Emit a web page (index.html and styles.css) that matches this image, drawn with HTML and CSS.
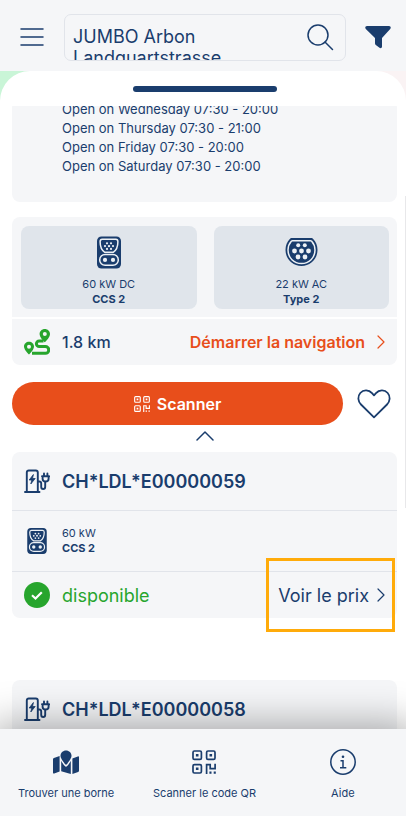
FILE: index.html
```html
<!DOCTYPE html>
<html lang="fr">
<head>
<meta charset="utf-8">
<meta name="viewport" content="width=device-width, initial-scale=1">
<title>JUMBO Arbon</title>
<link rel="stylesheet" href="styles.css">
</head>
<body>
<svg class="sprite" aria-hidden="true">
  <symbol id="qr" viewBox="0 0 24 24">
    <g fill="none" stroke="currentColor" stroke-width="1.7">
      <rect x="1" y="1" width="8.4" height="8.4" rx="1.4"/>
      <rect x="14.6" y="1" width="8.4" height="8.4" rx="1.4"/>
      <rect x="1" y="14.6" width="8.4" height="8.4" rx="1.4"/>
      <path d="M14.6 24V14.6h3.6v4h4.9v-4.8"/>
    </g>
    <path fill="currentColor" d="M3.9 3.9h2.6v2.6H3.9zM17.5 3.9h2.6v2.6h-2.6zM3.9 17.5h2.6v2.6H3.9zM17.4 21.6h2.1v2.2h-2.1zM21.7 21.6h2.1v2.2h-2.1z"/>
  </symbol>
  <symbol id="ccs" viewBox="0 0 24 32">
    <rect width="24" height="32" rx="4.5" fill="currentColor"/>
    <g fill="none" stroke="#edf1f5" stroke-width="1.5">
      <path d="M5.2 2.800h13.600c1.500 0 2.100 1 2.100 2.400 0 4.600-1.500 8.500-4.700 10.600H7.800C4.600 13.700 3.100 9.800 3.100 5.200c0-1.400.6-2.400 2.100-2.400z"/>
      <rect x="2.700" y="18" width="18.600" height="10.800" rx="5.400"/>
    </g>
    <g fill="#edf1f5">
      <circle cx="10" cy="6.800" r="1.100"/><circle cx="14" cy="6.800" r="1.100"/>
      <circle cx="8" cy="9.600" r="1.100"/><circle cx="12" cy="9.600" r="1.200"/><circle cx="16" cy="9.600" r="1.100"/>
      <circle cx="10" cy="12.400" r="1.100"/><circle cx="14" cy="12.400" r="1.100"/>
      <circle cx="8" cy="23.400" r="2.100"/><circle cx="16" cy="23.400" r="2.100"/>
    </g>
  </symbol>
  <symbol id="station" viewBox="0 0 26 24">
    <g fill="none" stroke="currentColor" stroke-width="1.900" stroke-linecap="round" stroke-linejoin="round">
      <path d="M1 23h14.500M2.800 23V3.500Q2.800 1.500 4.800 1.500h7Q13.800 1.500 13.800 3.500V23M14 12.500h1.300c1.300 0 1.900.8 1.900 2v3.200c0 1.500.8 2.300 2 2.300s2-.8 2-2.300V13"/>
      <path d="M18 7.300h7.200M20 4.500v2.300M23.400 4.500v2.300M18.600 7.500v2.200c0 1.700 1.200 2.800 3 2.800s3-1.100 3-2.800V7.500"/>
    </g>
    <path fill="currentColor" stroke="currentColor" stroke-width=".8" stroke-linejoin="round" d="M9.400 5.500 5.200 11h2.600l-1 4 4.400-5.500H8.500z"/>
  </symbol>
  <symbol id="chevron" viewBox="0 0 8 14">
    <path d="M1 1l6 6-6 6" fill="none" stroke="currentColor" stroke-width="1.200" stroke-linecap="round" stroke-linejoin="round"/>
  </symbol>
</svg>

<header class="topbar">
  <button class="icon-button" aria-label="Menu">
    <svg width="24" height="20" viewBox="0 0 24 20"><path d="M1 1h22M1 9h22M1 17h22" stroke="currentColor" stroke-width="1.500" stroke-linecap="round"/></svg>
  </button>
  <div class="search">
    <textarea class="search-input" aria-label="Recherche" spellcheck="false">JUMBO Arbon
Landquartstrasse</textarea>
    <button class="icon-button" aria-label="Rechercher">
      <svg width="27" height="27" viewBox="0 0 27 27" fill="none" stroke="currentColor" stroke-width="1.500" stroke-linecap="round"><circle cx="11" cy="11" r="10"/><path d="M18 18l7.500 7.500"/></svg>
    </button>
  </div>
  <button class="icon-button" aria-label="Filtrer">
    <svg width="26" height="24" viewBox="0 0 26 24"><path fill="currentColor" d="M2 0h22c1.600 0 2.300 1.700 1.200 2.900L17 12v8.600c0 1.400-1.400 2-2.500 1.200l-3.700-2.900c-.6-.4-.8-.9-.8-1.600V12L.8 2.900C-.3 1.700.4 0 2 0z"/></svg>
  </button>
</header>

<div class="map">
<main class="sheet">
  <div class="handle"></div>
  <div class="scroll">
    <section class="card hours">
      <p>Open on Wednesday 07:30 - 20:00</p>
      <p>Open on Thursday 07:30 - 21:00</p>
      <p>Open on Friday 07:30 - 20:00</p>
      <p>Open on Saturday 07:30 - 20:00</p>
    </section>

    <section class="card connectors">
      <div class="tiles">
        <div class="tile">
          <svg width="24" height="33"><use href="#ccs"/></svg>
          <p class="spec">60 kW DC<strong>CCS 2</strong></p>
        </div>
        <div class="tile">
          <svg width="33" height="33" viewBox="0 0 33 33">
            <path fill="currentColor" d="M7 2h19c1 0 1.600.3 2.200 1 2.700 3 4.300 6.300 4.300 11 0 9-7 16-16 16S.5 23 .5 14C.5 9.300 2.100 6 4.800 3 5.400 2.300 6 2 7 2z"/>
            <path fill="none" stroke="#edf1f5" stroke-width="1.500" d="M7.500 4.700h18c.5 0 .8.200 1.200.6 2.200 2.500 3.300 5.200 3.300 8.800 0 7.600-6 13.500-13.500 13.500S3 21.700 3 14.100c0-3.600 1.100-6.300 3.300-8.800.4-.4.700-.6 1.200-.6z"/>
            <g fill="#edf1f5"><circle cx="13.200" cy="9.300" r="2"/><circle cx="19.800" cy="9.300" r="2"/><circle cx="9.500" cy="15" r="2.400"/><circle cx="16.500" cy="15" r="2.400"/><circle cx="23.500" cy="15" r="2.400"/><circle cx="13" cy="21" r="2.400"/><circle cx="20" cy="21" r="2.400"/></g>
          </svg>
          <p class="spec">22 kW AC<strong>Type 2</strong></p>
        </div>
      </div>
      <div class="row distance">
        <svg class="row-icon green" width="26" height="26" viewBox="0 0 26 26">
          <path fill="currentColor" fill-rule="evenodd" d="M20.800 0c2.900 0 5.200 2.200 5.200 5 0 2.600-3 6.500-5.200 8.300C18.600 11.500 15.600 7.600 15.600 5c0-2.800 2.300-5 5.200-5zm0 3a2 2 0 1 0 0 4 2 2 0 0 0 0-4zM5 12.700c2.800 0 5 2.100 5 4.800 0 2.500-2.900 6.200-5 8-2.100-1.800-5-5.500-5-8 0-2.700 2.200-4.800 5-4.800zm0 3a2 2 0 1 0 0 4 2 2 0 0 0 0-4z"/>
          <path fill="none" stroke="currentColor" stroke-width="3" d="M19.500 12h-4.300a2.800 2.800 0 0 0 0 5.600h6.200a3.200 3.200 0 0 1 0 6.700H8"/>
        </svg>
        <span class="km">1.8 km</span>
        <a class="row-link navigate" href="#">Démarrer la navigation <svg width="8" height="14"><use href="#chevron"/></svg></a>
      </div>
    </section>

    <div class="actions">
      <button class="scan"><svg width="16" height="16"><use href="#qr"/></svg>Scanner</button>
      <button class="icon-button" aria-label="Favori">
        <svg width="34" height="30" viewBox="0 0 34 30"><path fill="none" stroke="currentColor" stroke-width="1.800" stroke-linejoin="round" d="M17 28.300 4 15.500C.8 12.300.4 7.300 3.300 4c3.200-3.600 8.600-3.300 11.700.2l2 2.200 2-2.200c3.100-3.500 8.500-3.800 11.700-.2 2.900 3.300 2.500 8.300-.7 11.500z"/></svg>
      </button>
    </div>

    <button class="collapse" aria-label="Replier">
      <svg width="18" height="10" viewBox="0 0 18 10"><path d="M1 9l8-8 8 8" fill="none" stroke="currentColor" stroke-width="1.500" stroke-linecap="round" stroke-linejoin="round"/></svg>
    </button>

    <section class="card evse">
      <h2 class="row title"><svg class="row-icon" width="26" height="24"><use href="#station"/></svg>CH*LDL*E00000059</h2>
      <div class="row plug">
        <span class="row-icon"><svg width="20" height="26"><use href="#ccs"/></svg></span>
        <p class="spec">60 kW<strong>CCS 2</strong></p>
      </div>
      <div class="row status">
        <svg class="row-icon green" width="26" height="26" viewBox="0 0 26 26"><circle cx="13" cy="13" r="13" fill="currentColor"/><path d="M8 13.300l3.500 3.200 6.300-6.300" fill="none" stroke="#fff" stroke-width="2.200"/></svg>
        <span class="green">disponible</span>
        <a class="row-link" href="#">Voir le prix <svg width="8" height="14"><use href="#chevron"/></svg></a>
      </div>
      <div class="highlight"></div>
    </section>

    <section class="card evse">
      <h2 class="row title"><svg class="row-icon" width="26" height="24"><use href="#station"/></svg>CH*LDL*E00000058</h2>
    </section>
  </div>
  <div class="scrollbar"></div>
</main>
</div>

<nav class="tabs">
  <a class="tab" href="#">
    <svg width="26" height="26" viewBox="0 0 26 26">
      <path fill="currentColor" d="M0 10.200c0-.6.300-1 .9-1.200L6.600 7v15.500L1.200 24.500c-.7.200-1.200-.1-1.200-.8zM19.400 9.400 24.800 7.400c.7-.3 1.200.1 1.200.8v13.500c0 .6-.3 1-.9 1.200L19.400 25zM8.200 11.800c1 2 2.300 3.700 3.600 5.300.7.800 1.700.8 2.400 0 1.300-1.600 2.600-3.300 3.600-5.300V25l-9.600-2.700z"/>
      <path fill="currentColor" d="M13 1.500c3.100 0 5.500 2.300 5.500 5.300 0 2.600-3 6.400-4.700 8.500-.5.600-1.100.6-1.600 0-1.700-2.100-4.700-5.900-4.700-8.500 0-3 2.400-5.300 5.500-5.300z"/>
    </svg>
    Trouver une borne
  </a>
  <a class="tab" href="#">
    <svg width="26" height="26" viewBox="-1 -1 26 26"><use href="#qr" width="24" height="24"/></svg>
    Scanner le code QR
  </a>
  <a class="tab" href="#">
    <svg width="26" height="26" viewBox="0 0 26 26"><circle cx="13" cy="13" r="12.200" fill="none" stroke="currentColor" stroke-width="1.500"/><circle cx="13" cy="7.800" r="1.300" fill="currentColor"/><path d="M10.500 11.700H13v6.800M10 18.700h6.300" fill="none" stroke="currentColor" stroke-width="1.500"/></svg>
    Aide
  </a>
</nav>
</body>
</html>
```

FILE: styles.css
```css
:root {
  --navy: #1a3d6d;
  --panel: #f5f6f8;
  --line: #e1e4ea;
  --tile: #e0e5eb;
  --orange: #e84e1b;
  --green: #27a52d;
}

* { box-sizing: border-box; }

body {
  margin: 0;
  height: 100vh;
  display: flex;
  flex-direction: column;
  overflow: hidden;
  background: var(--panel);
  color: var(--navy);
  font-family: Inter, "Liberation Sans", sans-serif;
}

p, h2 { margin: 0; }
a { color: inherit; text-decoration: none; }
svg { display: block; flex: none; }
.sprite { position: absolute; width: 0; height: 0; }

button {
  padding: 0;
  border: 0;
  background: none;
  color: inherit;
  font: inherit;
}

.icon-button { flex: none; }
.green { color: var(--green); }

.topbar {
  display: flex;
  align-items: center;
  gap: 19px;
  padding: 14px 15px 10px 20px;
}

.search {
  flex: 1;
  min-width: 0;
  display: flex;
  align-items: center;
  height: 47px;
  margin-left: 1px;
  padding-right: 11px;
  border: 1px solid var(--line);
  border-radius: 7px;
}

.search-input {
  flex: 1;
  min-width: 0;
  height: 45px;
  padding: 11px 0 0 8px;
  border: 0;
  outline: 0;
  resize: none;
  overflow: hidden;
  background: none;
  color: inherit;
  font: 18px/21px Inter, "Liberation Sans", sans-serif;
}

.map {
  flex: 1;
  min-height: 0;
  background: linear-gradient(90deg, #c9f5d7 50%, #faf3f4 50%);
}

.sheet {
  position: relative;
  display: flex;
  flex-direction: column;
  height: 100%;
  border-radius: 30px 30px 0 0;
  background: #fff;
  padding: 0 9px 0 12px;
}

.handle {
  flex: none;
  width: 144px;
  height: 6px;
  margin: 15px auto 14px;
  border-radius: 3px;
  background: var(--navy);
}

.scroll {
  flex: 1;
  overflow: hidden;
}

.scrollbar {
  position: absolute;
  top: 125px;
  right: 0;
  width: 1px;
  height: 312px;
  background: #e8e8ea;
}

.card {
  position: relative;
  border-radius: 8px;
  background: var(--panel);
}

.hours {
  margin-top: -6px;
  margin-bottom: 15px;
  padding: 0 12px 26px 50px;
  font-size: 13px;
  line-height: 19px;
}

.tiles {
  display: grid;
  grid-template-columns: 1fr 1fr;
  gap: 17px;
  padding: 9px 8px 8px 9px;
  border-bottom: 2px solid #fff;
}

.tile {
  display: flex;
  flex-direction: column;
  align-items: center;
  gap: 8px;
  padding: 10px 0 2px;
  border-radius: 8px;
  background: var(--tile);
  text-align: center;
}

.spec {
  font-size: 11px;
  line-height: 15px;
}

.spec strong { display: block; }

.row {
  display: flex;
  align-items: center;
  gap: 12px;
  padding: 0 12px;
}

.row-icon {
  display: flex;
  justify-content: center;
  flex: none;
  width: 26px;
}

.row-link {
  display: flex;
  align-items: center;
  gap: 8px;
  margin-left: auto;
}

.distance {
  height: 46px;
  font-size: 16px;
  font-weight: 500;
}

.navigate {
  gap: 12px;
  color: var(--orange);
  font-weight: 600;
}

.actions {
  display: flex;
  align-items: center;
  gap: 14px;
  margin-top: 17px;
  padding-right: 6px;
}

.scan {
  flex: 1;
  display: flex;
  align-items: center;
  justify-content: center;
  gap: 7px;
  height: 43px;
  border-radius: 22px;
  background: var(--orange);
  color: #fff;
  font-size: 16px;
  font-weight: 600;
}

.collapse {
  display: block;
  margin: 6px auto 11px;
}

.evse { margin-bottom: 62px; }

.title {
  height: 58px;
  font-size: 18px;
  font-weight: 600;
}

.plug {
  height: 62px;
  border-top: 1px solid var(--line);
  border-bottom: 1px solid var(--line);
}

.status {
  height: 46px;
  font-size: 18px;
}

.highlight {
  position: absolute;
  right: 2px;
  bottom: -14px;
  width: 129px;
  height: 74px;
  border: 3px solid #ffab0a;
  pointer-events: none;
}

.tabs {
  position: relative;
  display: grid;
  grid-template-columns: repeat(3, 1fr);
  margin: 0 -6px 0 -3px;
  padding: 20px 0 15px;
  background: var(--panel);
  box-shadow: 0 0 40px 4px rgba(0, 0, 0, 0.35);
}

.tab {
  display: flex;
  flex-direction: column;
  align-items: center;
  gap: 11px;
  font-size: 11px;
  line-height: 15px;
}
```
